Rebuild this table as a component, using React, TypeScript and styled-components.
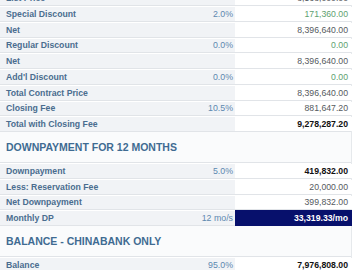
import React from "react";
import styled, { createGlobalStyle } from "styled-components";

const Global = createGlobalStyle`
  html, body { margin: 0; padding: 0; background: #ffffff; }
  body { font-family: "Liberation Sans", Arial, sans-serif; overflow: hidden; }
`;

const Sheet = styled.div`
  width: 352px;
  margin-top: -9.75px;
  border-right: 1px solid #e6e9ec;
  box-sizing: border-box;
`;

const Row = styled.div`
  display: grid;
  grid-template-columns: 165px 70px 117px;
  height: 15.75px;
  box-sizing: border-box;
  border-top: 1px solid #ffffff;
  border-bottom: 1px solid #e1e4e8;
  background: #f1f3f6;
`;

const Label = styled.div`
  display: flex;
  align-items: center;
  padding-left: 6px;
  font-size: 8.7px;
  font-weight: bold;
  color: #4a6d8f;
  white-space: nowrap;
`;

const Pct = styled.div`
  display: flex;
  align-items: center;
  justify-content: flex-end;
  padding-right: 2px;
  font-size: 8.8px;
  color: #5d88b0;
  white-space: nowrap;
`;

type Tone = "plain" | "green" | "strong" | "navy";

const toneColor: Record<Tone, string> = {
  plain: "#555a60",
  green: "#5e9f70",
  strong: "#111111",
  navy: "#ffffff",
};

const Value = styled.div<{ $tone: Tone }>`
  display: flex;
  align-items: center;
  justify-content: flex-end;
  padding-right: 4px;
  margin: ${(p) => (p.$tone === "navy" ? "-1px 0" : "0")};
  font-size: 8.7px;
  white-space: nowrap;
  background: ${(p) => (p.$tone === "navy" ? "#07106c" : "#ffffff")};
  color: ${(p) => toneColor[p.$tone]};
  font-weight: ${(p) => (p.$tone === "strong" || p.$tone === "navy" ? "bold" : "normal")};
`;

const Header = styled.div`
  display: flex;
  align-items: center;
  height: 31px;
  box-sizing: border-box;
  padding-left: 6px;
  background: #fafbfc;
  border-bottom: 1px solid #e1e4e8;
  font-size: 10.5px;
  font-weight: bold;
  color: #3f6b92;
  white-space: nowrap;
`;

type Line = { label: string; pct?: string; value: string; tone?: Tone };

const top: Line[] = [
  { label: "List Price", value: "8,568,000.00" },
  { label: "Special Discount", pct: "2.0%", value: "171,360.00", tone: "green" },
  { label: "Net", value: "8,396,640.00" },
  { label: "Regular Discount", pct: "0.0%", value: "0.00", tone: "green" },
  { label: "Net", value: "8,396,640.00" },
  { label: "Add'l Discount", pct: "0.0%", value: "0.00", tone: "green" },
  { label: "Total Contract Price", value: "8,396,640.00" },
  { label: "Closing Fee", pct: "10.5%", value: "881,647.20" },
  { label: "Total with Closing Fee", value: "9,278,287.20", tone: "strong" },
];

const dp: Line[] = [
  { label: "Downpayment", pct: "5.0%", value: "419,832.00", tone: "strong" },
  { label: "Less: Reservation Fee", value: "20,000.00" },
  { label: "Net Downpayment", value: "399,832.00" },
  { label: "Monthly DP", pct: "12 mo/s", value: "33,319.33/mo", tone: "navy" },
];

const bal: Line[] = [
  { label: "Balance", pct: "95.0%", value: "7,976,808.00", tone: "strong" },
];

const Rows = ({ items }: { items: Line[] }) => (
  <>
    {items.map((l, i) => (
      <Row key={i}>
        <Label>{l.label}</Label>
        <Pct>{l.pct ?? ""}</Pct>
        <Value $tone={l.tone ?? "plain"}>{l.value}</Value>
      </Row>
    ))}
  </>
);

export default function App() {
  return (
    <>
      <Global />
      <Sheet>
        <Rows items={top} />
        <Header>DOWNPAYMENT FOR 12 MONTHS</Header>
        <Rows items={dp} />
        <Header>BALANCE - CHINABANK ONLY</Header>
        <Rows items={bal} />
      </Sheet>
    </>
  );
}
